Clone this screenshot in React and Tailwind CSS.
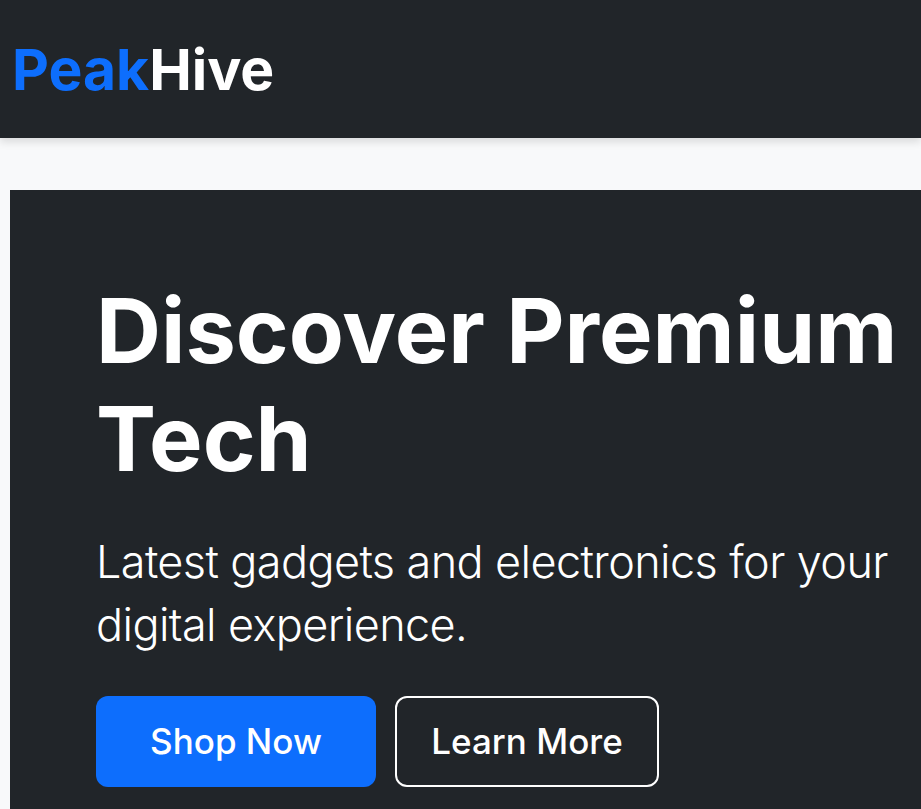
import React from 'react';

const App = () => {
  return (
    <div className="min-h-[809px] bg-[#f8f9fa] overflow-hidden" style={{ fontFamily: 'Inter, "Noto Sans", sans-serif' }}>
      <nav className="h-[138px] bg-[#212529] flex items-center px-[12px] shadow-[0_4px_8px_rgba(0,0,0,0.12)] relative z-10">
        <span className="text-[57px] font-bold leading-none">
          <span className="text-[#0d6efd]">Peak</span>
          <span className="text-white">Hive</span>
        </span>
      </nav>
      <section className="mt-[52px] ml-[10px] w-[1100px] bg-[#212529] pl-[86px] pt-[87px] pb-[40px]">
        <h1 className="text-[90px] leading-[108px] font-bold text-white">
          Discover Premium
          <br />
          Tech
        </h1>
        <p className="mt-[37px] text-[45px] leading-[63px] font-light text-white tracking-[-0.6px]">
          Latest gadgets and electronics for your
          <br />
          digital experience.
        </p>
        <div className="mt-[40px] flex gap-[19px]">
          <button className="w-[280px] h-[91px] rounded-[12px] bg-[#0d6efd] text-white text-[35px] font-medium">
            Shop Now
          </button>
          <button className="w-[264px] h-[91px] rounded-[12px] border-2 border-white text-white text-[35px] font-medium">
            Learn More
          </button>
        </div>
      </section>
    </div>
  );
};

export default App;
